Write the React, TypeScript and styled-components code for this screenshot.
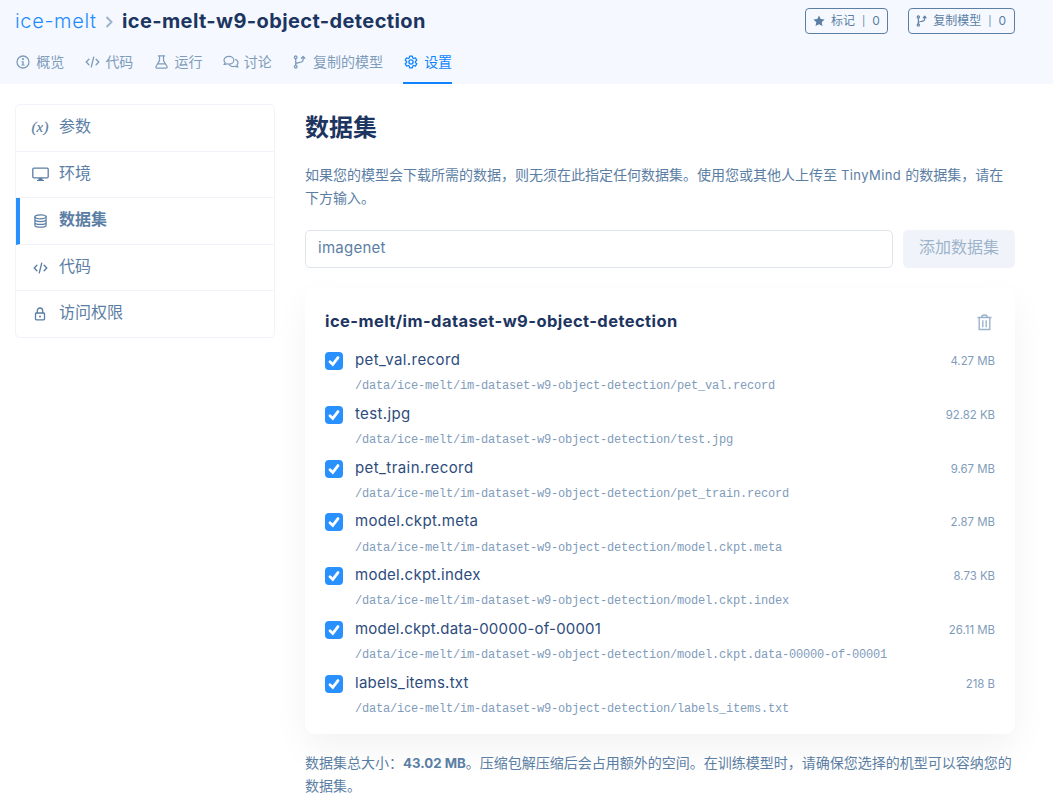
import React from "react";
import styled, { createGlobalStyle } from "styled-components";

const GlobalStyle = createGlobalStyle`
  * { box-sizing: border-box; }
  body {
    margin: 0;
    background: #fff;
    color: #5b7ea4;
    font-family: Inter, "Noto Sans CJK SC", sans-serif;
  }
  h1, h2, h3, p { margin: 0; }
`;

const Page = styled.div`
  width: 1053px;
  height: 802px;
  overflow: hidden;
`;

const Header = styled.header`
  height: 84px;
  padding: 0 38px 0 15px;
  background: #f5f9ff;
`;

const TitleRow = styled.div`
  display: flex;
  align-items: center;
  justify-content: space-between;
  height: 42px;
`;

const Breadcrumb = styled.h1`
  display: flex;
  align-items: center;
  height: 42px;
  font-size: 20px;
  line-height: 42px;
  white-space: nowrap;
`;

const Owner = styled.span<{ $track: number }>`
  width: 83px;
  color: #1f8bff;
  font-weight: 300;
  letter-spacing: ${(p) => p.$track}px;
`;

const Crumb = styled.svg`
  width: 9px;
  height: 14px;
  margin: 1px 8px 0 7px;
`;

const Project = styled.span<{ $track: number }>`
  color: #1d3561;
  font-weight: 700;
  letter-spacing: ${(p) => p.$track}px;
`;

const Actions = styled.div`
  display: flex;
  gap: 20px;
`;

const OutlineButton = styled.button<{ $width: number }>`
  display: flex;
  align-items: center;
  width: ${(p) => p.$width}px;
  height: 26px;
  padding: 0 0 1px 7px;
  border: 1px solid #5b7ea4;
  border-radius: 4px;
  background: transparent;
  color: #5b7ea4;
  font: 12px/16px Inter, "Noto Sans CJK SC", sans-serif;
  white-space: nowrap;

  svg { margin-right: 6px; flex: none; }
`;

const Divider = styled.span`
  margin: 0 7px;
  font-size: 10px;
`;

const Tabs = styled.nav`
  display: flex;
  gap: 20px;
  height: 42px;
`;

const Tab = styled.a<{ $active?: boolean }>`
  display: flex;
  align-items: center;
  height: 42px;
  padding-bottom: ${(p) => (p.$active ? 0 : 2)}px;
  border-bottom: ${(p) => (p.$active ? "2px solid #1183ff" : "0")};
  color: ${(p) => (p.$active ? "#1183ff" : "#7f9cbb")};
  font-size: 14px;
  line-height: 20px;
  white-space: nowrap;
`;

const TabIcon = styled.span`
  display: flex;
  align-items: center;
  justify-content: center;
  width: 16px;
  margin-right: 5.2px;
`;

const Body = styled.div`
  display: flex;
  gap: 30px;
  padding: 20px 38px 0 15px;
`;

const Sidebar = styled.aside`
  flex: none;
  width: 260px;
  height: 234px;
  border: 1px solid #f0f3f9;
  border-radius: 5px;
`;

const SideItem = styled.div<{ $active?: boolean }>`
  display: flex;
  align-items: center;
  height: 46.6px;
  padding-left: ${(p) => (p.$active ? 11 : 15)}px;
  border-left: ${(p) => (p.$active ? "4px solid #2990ff" : "0")};
  border-bottom: 1px solid #f0f3f9;
  font-size: 16px;
  font-weight: ${(p) => (p.$active ? 700 : 400)};
  line-height: 24px;

  &:last-child { border-bottom-color: transparent; }
  > span { padding-bottom: 3.4px; }
`;

const SideIcon = styled.i`
  display: flex;
  justify-content: center;
  width: 18px;
  margin: 0.6px 10px 0 0;
`;

const Main = styled.main`
  flex: 1;
  min-width: 0;
`;

const Heading = styled.h2`
  height: 47px;
  color: #1d3561;
  font-size: 24px;
  font-weight: 700;
  line-height: 47px;
`;

const Note = styled.p<{ $top: number }>`
  height: 46px;
  margin-top: ${(p) => p.$top}px;
  font-size: 14px;
  line-height: 23px;
  white-space: nowrap;

  b { font-weight: 700; font-size: 13.25px; line-height: 0; }
`;

const Latin = styled.span<{ $track: number; $size?: number }>`
  font-size: ${(p) => (p.$size ? `${p.$size}px` : "inherit")};
  letter-spacing: ${(p) => p.$track}px;
  line-height: ${(p) => (p.$size ? 0 : "inherit")};
`;

const AddRow = styled.div`
  display: flex;
  gap: 10px;
  height: 38px;
  margin-top: 21px;
`;

const Field = styled.div`
  width: 588px;
  padding: 0 12px;
  border: 1px solid #dfe5ea;
  border-radius: 5px;
  font-size: 15px;
  line-height: 33px;
`;

const AddButton = styled.button`
  width: 112px;
  padding: 0 0 7px;
  border: 0;
  border-radius: 5px;
  background: #f0f4fa;
  color: #9db3cb;
  font: 16px/24px "Noto Sans CJK SC", sans-serif;
`;

const Card = styled.section`
  height: 446px;
  margin-top: 20px;
  padding: 18px 20px 0;
  border-radius: 10px;
  background: #fff;
  box-shadow: 0 15px 35px rgba(20, 20, 40, 0.05);
`;

const CardHead = styled.div`
  display: flex;
  justify-content: space-between;
  height: 40px;
  padding-right: 3px;
`;

const CardTitle = styled.h3<{ $track: number }>`
  color: #1d3561;
  font-size: 16.5px;
  font-weight: 650;
  letter-spacing: ${(p) => p.$track}px;
  line-height: 30px;
`;

const FileRow = styled.div`
  display: flex;
  height: 53.8px;
`;

const Check = styled.span`
  display: flex;
  align-items: center;
  justify-content: center;
  flex: none;
  width: 18px;
  height: 18px;
  margin: 6px 12px 0 0;
  border-radius: 4px;
  background: #2990ff;
`;

const FileInfo = styled.div`
  flex: 1;
`;

const FileName = styled.div<{ $track: number }>`
  height: 27px;
  color: #2d4c7c;
  font-size: 15px;
  letter-spacing: ${(p) => p.$track}px;
  line-height: 28px;
`;

const FilePath = styled.div`
  padding-top: 0.2px;
  color: #7f9cbb;
  font-family: "Liberation Mono", monospace;
  font-size: 12px;
  letter-spacing: -0.2px;
  line-height: 26px;
  white-space: nowrap;
`;

const FileSize = styled.div`
  color: #7f9cbb;
  font-size: 11.4px;
  line-height: 31px;
`;

const Variable = styled.em`
  font-family: "Liberation Serif", serif;
  font-size: 15px;
  font-weight: 400;
  line-height: 16px;
  margin-top: -1.4px;
  letter-spacing: 0.2px;
  -webkit-text-stroke: 0.2px currentColor;
`;

const line = {
  fill: "none",
  stroke: "currentColor",
  strokeLinecap: "round" as const,
  strokeLinejoin: "round" as const,
};

const InfoIcon = () => (
  <svg width="14" height="14" viewBox="0 0 14 14">
    <circle cx="7" cy="7" r="6" {...line} strokeWidth="1.3" />
    <circle cx="7" cy="4.1" r="1.1" fill="currentColor" />
    <path d="M5.5 6.2h2.2v3.2h.9v1.1H5.4V9.4h.9V7.3h-.8z" fill="currentColor" />
  </svg>
);

const CodeIcon = () => (
  <svg width="15" height="12" viewBox="0 0 15 12">
    <path d="M3.9 3.2 1.2 6l2.7 2.8M11.1 3.2l2.7 2.8-2.7 2.8M8.7 1.2 6.3 10.8" {...line} strokeWidth="1.35" />
  </svg>
);

const FlaskIcon = () => (
  <svg width="13" height="14" viewBox="0 0 13 14">
    <path d="M3.4.9h6.2M4.5 1v4.6L1 11.5c-.4.8 0 1.6.9 1.6h9.2c.9 0 1.3-.8.9-1.6L8.5 5.6V1M3 8.9h7" {...line} strokeWidth="1.2" />
  </svg>
);

const CommentsIcon = () => (
  <svg width="16" height="14" viewBox="0 0 16 14">
    <path d="M5.9 1.3c2.8 0 4.9 1.7 4.9 3.9s-2.1 3.9-4.9 3.9c-.8 0-1.5-.1-2.2-.4-.8.5-1.7.8-2.7.8.6-.6 1-1.2 1.1-1.9C1.4 6.9 1 6.1 1 5.2c0-2.2 2.1-3.9 4.9-3.9z" {...line} strokeWidth="1.2" />
    <path d="M12.5 4.5c1.5.5 2.5 1.7 2.5 3.2 0 .9-.4 1.7-1.1 2.4.1.7.5 1.3 1.1 1.9-1 0-1.9-.3-2.7-.8-2 .7-4.5.3-5.7-1.1" {...line} strokeWidth="1.2" />
  </svg>
);

const BranchIcon = ({ size = 14 }: { size?: number }) => (
  <svg width={size * 0.93} height={size} viewBox="0 0 13 14">
    <g {...line} strokeWidth="1.3">
      <circle cx="2.7" cy="2.3" r="1.3" />
      <circle cx="2.7" cy="11.7" r="1.3" />
      <path d="M2.7 3.8v6.4M2.7 9.2c0-2.4 7.4-.6 7.4-4.2V2M8.4 3.3l1.7-1.9 1.7 1.9" />
    </g>
  </svg>
);

const GearIcon = () => (
  <svg width="14" height="14" viewBox="0 0 24 24">
    <g {...line} strokeWidth="2.2">
      <path d="M9.7 2h4.6l.7 3.1 1.5.9 3.1-1 2.3 4-2.4 2.1v1.8l2.4 2.1-2.3 4-3.1-1-1.5.9-.7 3.1H9.7L9 18.9 7.5 18l-3.1 1-2.3-4 2.4-2.1v-1.8L2.1 9l2.3-4 3.1 1L9 5.1z" />
      <circle cx="12" cy="12" r="3.6" />
    </g>
  </svg>
);

const StarIcon = () => (
  <svg width="12" height="12" viewBox="0 0 12 12">
    <path d="m6 .4 1.7 3.6 3.9.5-2.9 2.7.8 3.9L6 9.2l-3.5 1.9.8-3.9L.4 4.5 4.3 4z" fill="currentColor" />
  </svg>
);

const MonitorIcon = () => (
  <svg width="17" height="15" viewBox="0 0 17 15">
    <rect x=".8" y="1.2" width="15.4" height="9.6" rx="1" {...line} strokeWidth="1.3" />
    <path d="M6.8 11h3.4l.5 2H12v1H5v-1h1.3z" fill="currentColor" />
  </svg>
);

const DatabaseIcon = () => (
  <svg width="13" height="14" viewBox="0 0 13 14">
    <g {...line} strokeWidth="1.2">
      <ellipse cx="6.5" cy="2.8" rx="5.6" ry="2" />
      <path d="M.9 2.8v8.4c0 1.1 2.5 2 5.6 2s5.6-.9 5.6-2V2.8M.9 5.6c0 1.1 2.5 2 5.6 2s5.6-.9 5.6-2M.9 8.4c0 1.1 2.5 2 5.6 2s5.6-.9 5.6-2" />
    </g>
  </svg>
);

const LockIcon = () => (
  <svg width="12" height="14" viewBox="0 0 12 14">
    <rect x="1.5" y="6" width="9" height="6.8" rx=".8" {...line} strokeWidth="1.3" />
    <path d="M3.3 6V3.7C3.3 2.2 4.4 1 6 1s2.7 1.2 2.7 2.7V6" {...line} strokeWidth="1.3" />
    <circle cx="6" cy="9.4" r="1" fill="currentColor" />
  </svg>
);

const Trash = styled.svg`
  width: 15px;
  height: 18px;
  margin-top: 8px;
`;

const TrashIcon = () => (
  <Trash viewBox="0 0 15 18">
    <g fill="none" stroke="#9db3cb" strokeWidth="1.4">
      <path d="M.5 3.5h14M2.2 3.5v12h10.6v-12M4.6 3.5c.1-1.7 1.1-2.5 2.9-2.5s2.8.8 2.9 2.5M5.8 6.2v7M9.2 6.2v7" />
    </g>
  </Trash>
);

const tabs = [
  { label: "概览", icon: <InfoIcon /> },
  { label: "代码", icon: <CodeIcon /> },
  { label: "运行", icon: <FlaskIcon /> },
  { label: "讨论", icon: <CommentsIcon /> },
  { label: "复制的模型", icon: <BranchIcon /> },
  { label: "设置", icon: <GearIcon />, active: true },
];

const sections = [
  { label: "参数", icon: <Variable>(x)</Variable> },
  { label: "环境", icon: <MonitorIcon /> },
  { label: "数据集", icon: <DatabaseIcon />, active: true },
  { label: "代码", icon: <CodeIcon /> },
  { label: "访问权限", icon: <LockIcon /> },
];

const root = "/data/ice-melt/im-dataset-w9-object-detection/";

const files = [
  { name: "pet_val.record", size: "4.27 MB", track: 0.42 },
  { name: "test.jpg", size: "92.82 KB", track: 0.35 },
  { name: "pet_train.record", size: "9.67 MB", track: 0.42 },
  { name: "model.ckpt.meta", size: "2.87 MB", track: 0.32 },
  { name: "model.ckpt.index", size: "8.73 KB", track: 0.26 },
  { name: "model.ckpt.data-00000-of-00001", size: "26.11 MB", track: 0.19 },
  { name: "labels_items.txt", size: "218 B", track: 0.25 },
];

export default function App() {
  return (
    <Page>
      <GlobalStyle />
      <Header>
        <TitleRow>
          <Breadcrumb>
            <Owner $track={0.65}>ice-melt</Owner>
            <Crumb viewBox="0 0 9 14">
              <path d="m1.5 2 5 5-5 5" fill="none" stroke="#9db3cb" strokeWidth="2" />
            </Crumb>
            <Project $track={0.38}>ice-melt-w9-object-detection</Project>
          </Breadcrumb>
          <Actions>
            <OutlineButton $width={83}>
              <StarIcon />
              标记<Divider>|</Divider>0
            </OutlineButton>
            <OutlineButton $width={107}>
              <BranchIcon size={12} />
              复制模型<Divider>|</Divider>0
            </OutlineButton>
          </Actions>
        </TitleRow>
        <Tabs>
          {tabs.map((t) => (
            <Tab key={t.label} $active={t.active}>
              <TabIcon>{t.icon}</TabIcon>
              {t.label}
            </Tab>
          ))}
        </Tabs>
      </Header>
      <Body>
        <Sidebar>
          {sections.map((s) => (
            <SideItem key={s.label} $active={s.active}>
              <SideIcon>{s.icon}</SideIcon>
              <span>{s.label}</span>
            </SideItem>
          ))}
        </Sidebar>
        <Main>
          <Heading>数据集</Heading>
          <Note $top={12}>
            如果您的模型会下载所需的数据，则无须在此指定任何数据集。使用您或其他人上传至 <Latin $track={0.42} $size={13}>TinyMind</Latin> 的数据集，请在
            <br />
            下方输入。
          </Note>
          <AddRow>
            <Field>
              <Latin $track={0.25}>imagenet</Latin>
            </Field>
            <AddButton>添加数据集</AddButton>
          </AddRow>
          <Card>
            <CardHead>
              <CardTitle $track={0.42}>ice-melt/im-dataset-w9-object-detection</CardTitle>
              <TrashIcon />
            </CardHead>
            {files.map((f) => (
              <FileRow key={f.name}>
                <Check>
                  <svg width="12" height="12" viewBox="0 0 12 12">
                    <path d="m2 6.7 2.8 2.7L10 2.6" fill="none" stroke="#fff" strokeWidth="2.8" strokeLinecap="round" />
                  </svg>
                </Check>
                <FileInfo>
                  <FileName $track={f.track}>{f.name}</FileName>
                  <FilePath>{root + f.name}</FilePath>
                </FileInfo>
                <FileSize>{f.size}</FileSize>
              </FileRow>
            ))}
          </Card>
          <Note $top={17}>
            数据集总大小：<b>43.02 MB</b>。压缩包解压缩后会占用额外的空间。在训练模型时，请确保您选择的机型可以容纳您的
            <br />
            数据集。
          </Note>
        </Main>
      </Body>
    </Page>
  );
}
